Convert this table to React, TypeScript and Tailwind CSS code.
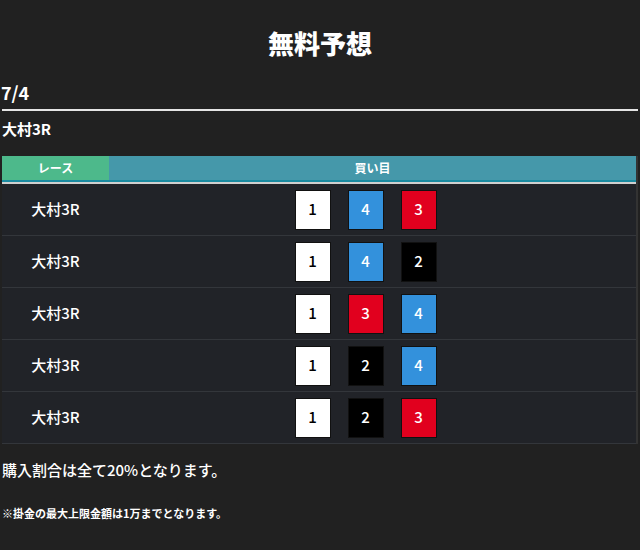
const ROWS: { race: string; picks: number[] }[] = [
  { race: '大村3R', picks: [1, 4, 3] },
  { race: '大村3R', picks: [1, 4, 2] },
  { race: '大村3R', picks: [1, 3, 4] },
  { race: '大村3R', picks: [1, 2, 4] },
  { race: '大村3R', picks: [1, 2, 3] },
];

const BOX: Record<number, string> = {
  1: 'bg-white text-black',
  2: 'bg-black text-white',
  3: 'bg-[#e1001e] text-white',
  4: 'bg-[#3391dc] text-white',
};

export default function App() {
  return (
    <div className="min-h-[550px] bg-[#212121] text-white px-[2px] pt-[28px] font-['Noto_Sans_CJK_JP','Noto_Sans',sans-serif]">
      <h1 className="text-center text-[26px] font-black leading-[30px]">無料予想</h1>

      <div className="mt-[23px] text-[18px] font-bold leading-[22px] -ml-[1px]">7/4</div>
      <div className="mt-[6px] h-[2px] bg-[#e5e5e5]" />
      <div className="mt-[8px] text-[15px] font-bold leading-[20px]">大村3R</div>

      <div className="mt-[17px] border-r-[2px] border-[#333]">
        <div className="flex h-[26px] border-b-[2px] border-[#1a8aa0] text-[12px] font-bold leading-[24px]">
          <div className="w-[107px] bg-[#4db98b] text-center">レース</div>
          <div className="flex-1 bg-[#4598aa] text-center">買い目</div>
        </div>
        <div className="h-[2px] bg-[#cfcfcf]" />
        {ROWS.map((r, i) => (
          <div key={i} className="flex h-[52px] items-center bg-[#212328] border-b border-[#33363b]">
            <div className="w-[107px] text-center text-[15px] font-medium">{r.race}</div>
            <div className="flex-1 flex justify-center gap-[17px] pr-[14px]">
              {r.picks.map((p, j) => (
                <div
                  key={j}
                  className={`w-[36px] h-[40px] flex items-center justify-center text-[15px] font-medium border border-[#111] ${BOX[p]}`}
                >
                  {p}
                </div>
              ))}
            </div>
          </div>
        ))}
      </div>

      <p className="mt-[15px] text-[15px] font-medium leading-[22px]">購入割合は全て20%となります。</p>
      <p className="mt-[24px] text-[11px] font-bold leading-[16px]">※掛金の最大上限金額は1万までとなります。</p>
    </div>
  );
}
